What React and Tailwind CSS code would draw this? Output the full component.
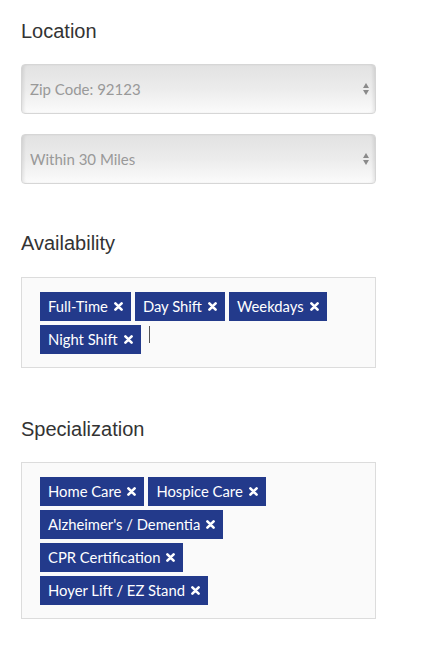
import { useState } from "react"

const availability = ["Full-Time", "Day Shift", "Weekdays", "Night Shift"]
const specialization = ["Home Care", "Hospice Care", "Alzheimer's / Dementia", "CPR Certification", "Hoyer Lift / EZ Stand"]

function XIcon() {
    return (
        <svg width="9" height="9" viewBox="0 0 9 9" className="ml-[6px] shrink-0">
            <path d="M1.4 1.4 L7.6 7.6 M7.6 1.4 L1.4 7.6" stroke="white" strokeWidth="2.6" strokeLinecap="round" />
        </svg>
    )
}

function Tag({ label, onRemove }) {
    return (
        <span className="inline-flex items-center h-[29px] pl-2 pr-2 bg-[#233a8b] text-white text-[14.8px] cursor-pointer" onClick={onRemove}>
            {label}
            <XIcon />
        </span>
    )
}

function Select({ value }) {
    return (
        <div className="relative h-[50px] w-[355px] rounded-[4px] border border-[#d6d6d6] bg-gradient-to-b from-[#e2e2e2] via-[#ececec] to-[#fbfbfb] shadow-[inset_3px_0_3px_-1px_rgba(0,0,0,0.08),inset_-3px_0_3px_-1px_rgba(0,0,0,0.08)] flex items-center pl-2 pr-[6px]">
            <span className="text-[15px] text-[#999] flex-1">{value}</span>
            <div className="flex flex-col items-center gap-[2px]">
                <svg width="6" height="5" viewBox="0 0 6 5"><path d="M3 0 L6 5 L0 5 Z" fill="#8a8a8a" /></svg>
                <svg width="6" height="5" viewBox="0 0 6 5"><path d="M0 0 L6 0 L3 5 Z" fill="#8a8a8a" /></svg>
            </div>
        </div>
    )
}

function TagBox({ items, setItems, cursor }) {
    return (
        <div className="w-[355px] border border-[#dcdcdc] bg-[#fafafa] pt-[14px] pb-[13px] pl-[18px] pr-[30px] flex flex-wrap gap-1">
            {items.map(t => (
                <Tag key={t} label={t} onRemove={() => setItems(items.filter(i => i !== t))} />
            ))}
            {cursor && <span className="w-px h-[17px] mt-[1px] ml-[4px] bg-[#555]"></span>}
        </div>
    )
}

export default function App() {
    const [avail, setAvail] = useState(availability)
    const [spec, setSpec] = useState(specialization)

    return (
        <div className="bg-white min-h-[649px] pl-[21px] pt-[19px] font-['Lato',sans-serif]">
            <h2 className="font-['Liberation_Sans',Arial,sans-serif] text-[20px] leading-6 text-[#333]">Location</h2>
            <div className="mt-[21px] flex flex-col gap-5">
                <Select value="Zip Code: 92123" />
                <Select value="Within 30 Miles" />
            </div>

            <h2 className="mt-[47px] font-['Liberation_Sans',Arial,sans-serif] text-[20px] leading-6 text-[#333]">Availability</h2>
            <div className="mt-[22px]">
                <TagBox items={avail} setItems={setAvail} cursor />
            </div>

            <h2 className="mt-[49px] font-['Liberation_Sans',Arial,sans-serif] text-[20px] leading-6 text-[#333]">Specialization</h2>
            <div className="mt-[21px]">
                <TagBox items={spec} setItems={setSpec} />
            </div>
        </div>
    )
}
